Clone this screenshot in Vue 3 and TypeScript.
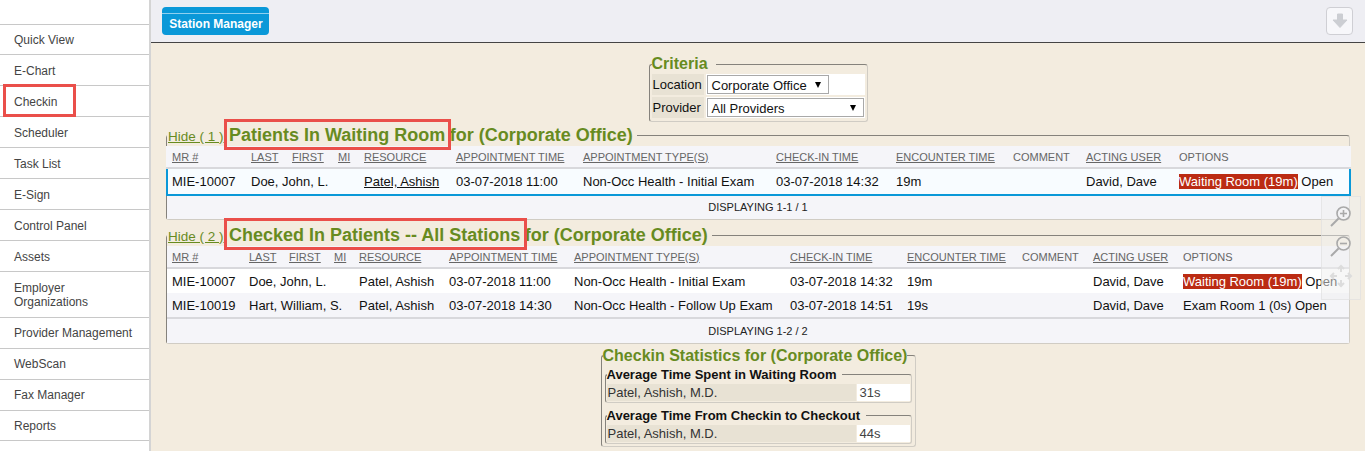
<script setup lang="ts">
const menu = ['Quick View','E-Chart','Checkin','Scheduler','Task List','E-Sign','Control Panel','Assets','Employer Organizations','Provider Management','WebScan','Fax Manager','Reports']
const heads = ['MR #','LAST','FIRST','MI','RESOURCE','APPOINTMENT TIME','APPOINTMENT TYPE(S)','CHECK-IN TIME','ENCOUNTER TIME','COMMENT','ACTING USER','OPTIONS']
const plain = new Set(['COMMENT','OPTIONS'])
const w1 = [79,41,46,26,92,127,193,120,117,73,93,176]
const w2 = [77,40,45,25,90,125,216,117,115,71,90,171]
const wait = { mr:'MIE-10007', name:'Doe, John, L.', res:'Patel, Ashish', time:'03-07-2018 11:00', type:'Non-Occ Health - Initial Exam', checkin:'03-07-2018 14:32', enc:'19m', user:'David, Dave', room:'Waiting Room (19m)', red:true }
const hart = { mr:'MIE-10019', name:'Hart, William, S.', res:'Patel, Ashish', time:'03-07-2018 14:30', type:'Non-Occ Health - Follow Up Exam', checkin:'03-07-2018 14:51', enc:'19s', user:'David, Dave', room:'Exam Room 1 (0s)', red:false }
</script>

<template>
  <div class="page">
    <nav class="side">
      <a v-for="m in menu" :key="m" class="item" :class="{ tall: m.startsWith('Employer') }">{{ m }}</a>
    </nav>
    <main class="main">
      <header class="bar">
        <button class="station">Station Manager</button>
        <button class="down" aria-label="Download">
          <svg width="20" height="20" viewBox="0 0 20 20"><path d="M7.5 3h5v6h4.5L10 16.5 3 9h4.5z" fill="#ccced3" stroke="#ccced3" stroke-linejoin="round"/></svg>
        </button>
      </header>

      <div class="content">
        <fieldset class="box criteria">
          <legend class="lg16">Criteria</legend>
          <div class="crit-row">
            <span class="lab">Location</span>
            <span class="val"><span class="sel s1">Corporate Office<i class="tri"></i></span></span>
          </div>
          <div class="crit-row">
            <span class="lab">Provider</span>
            <span class="val"><span class="sel s2">All Providers<i class="tri"></i></span></span>
          </div>
        </fieldset>

        <fieldset class="box sect first">
          <legend class="sect-lg"><a class="hide">Hide ( 1 )</a> <b>Patients In Waiting Room</b> <b>for (Corporate Office)</b></legend>
          <table class="grid g1">
            <colgroup><col v-for="(w,i) in w1" :key="i" :style="{ width: w + 'px' }"></colgroup>
            <thead><tr><th v-for="h in heads" :key="h"><span :class="{ u: !plain.has(h) }">{{ h }}</span></th></tr></thead>
            <tbody>
              <tr class="selrow">
                <td>{{ wait.mr }}</td><td colspan="3">{{ wait.name }}</td><td><u>{{ wait.res }}</u></td><td>{{ wait.time }}</td><td>{{ wait.type }}</td><td>{{ wait.checkin }}</td><td>{{ wait.enc }}</td><td></td><td>{{ wait.user }}</td>
                <td><span class="red">{{ wait.room }}</span> Open</td>
              </tr>
            </tbody>
          </table>
          <div class="foot">DISPLAYING 1-1 / 1</div>
        </fieldset>

        <fieldset class="box sect second">
          <legend class="sect-lg"><a class="hide">Hide ( 2 )</a> <b>Checked In Patients -- All Stations</b> <b>for (Corporate Office)</b></legend>
          <table class="grid g2">
            <colgroup><col v-for="(w,i) in w2" :key="i" :style="{ width: w + 'px' }"></colgroup>
            <thead><tr><th v-for="h in heads" :key="h"><span :class="{ u: !plain.has(h) }">{{ h }}</span></th></tr></thead>
            <tbody>
              <tr v-for="(r,i) in [wait, hart]" :key="r.mr" :class="i ? 'alt' : 'wh'">
                <td>{{ r.mr }}</td><td colspan="3">{{ r.name }}</td><td>{{ r.res }}</td><td>{{ r.time }}</td><td>{{ r.type }}</td><td>{{ r.checkin }}</td><td>{{ r.enc }}</td><td></td><td>{{ r.user }}</td>
                <td><span :class="{ red: r.red }">{{ r.room }}</span> Open</td>
              </tr>
            </tbody>
          </table>
          <div class="foot foot2">DISPLAYING 1-2 / 2</div>
        </fieldset>

        <fieldset class="box stats">
          <legend class="lg16 stats-lg">Checkin Statistics for (Corporate Office)</legend>
          <fieldset class="box sub">
            <legend>Average Time Spent in Waiting Room</legend>
            <div class="stat"><span class="sn">Patel, Ashish, M.D.</span><span class="sv">31s</span></div>
          </fieldset>
          <fieldset class="box sub">
            <legend>Average Time From Checkin to Checkout</legend>
            <div class="stat"><span class="sn">Patel, Ashish, M.D.</span><span class="sv">44s</span></div>
          </fieldset>
        </fieldset>
      </div>
    </main>

    <div class="tools">
      <div class="tool"><svg width="26" height="26" viewBox="0 0 26 26" fill="none" stroke="#a9a9a9" stroke-width="1.6"><circle cx="15.5" cy="10.5" r="6.5"/><path d="M12 10.5h7M15.5 7v7"/><path d="M10.5 15.5 3 23" stroke-width="2"/></svg></div>
      <div class="tool"><svg width="26" height="26" viewBox="0 0 26 26" fill="none" stroke="#a9a9a9" stroke-width="1.6"><circle cx="15.5" cy="10.5" r="6.5"/><path d="M12 10.5h7"/><path d="M10.5 15.5 3 23" stroke-width="2"/></svg></div>
      <div class="tool"><svg width="26" height="26" viewBox="0 0 26 26" fill="none" stroke="#dcdcdc" stroke-width="2"><path d="M13 3v6M13 17v6M3 13h6M17 13h6M10 6l3-3 3 3M10 20l3 3 3-3M6 10l-3 3 3 3M20 10l3 3-3 3"/></svg></div>
    </div>

    <div class="mark m1"></div>
    <div class="mark m2"></div>
    <div class="mark m3"></div>
  </div>
</template>

<style>
html, body { margin: 0; overflow: hidden; }
</style>

<style scoped>
.page { position: relative; display: flex; width: 1365px; height: 451px; overflow: hidden; font-family: "Liberation Sans", Arial, sans-serif; background: #f3ecdf; color: #111; }
.side { width: 149px; flex: none; background: #fff; border-right: 2px solid #d4d4d4; padding-top: 24px; }
.item { display: flex; align-items: center; box-sizing: border-box; height: 31px; padding: 0 14px; font-size: 12px; color: #444; border-top: 1px solid #c8c8c8; line-height: 14px; }
.item:first-child { height: 30px; }
.item:nth-child(n+2):nth-child(-n+8) { padding-top: 1px; }
.item:last-child { border-bottom: 1px solid #c8c8c8; }
.item.tall { height: 46px; padding-right: 40px; }
.main { flex: 1; min-width: 0; }
.bar { background: #eeeef3; border-bottom: 1px solid #444; display: flex; align-items: flex-start; justify-content: space-between; padding: 7px 12px 0 11px; box-sizing: border-box; height: 43px; }
.station { width: 107px; height: 28px; border: 0; border-radius: 4px; background: #0a98d8; color: #fff; font: bold 12px "Liberation Sans", Arial, sans-serif; padding: 6px 0 0 1px; position: relative; }
.station::before { content: ""; position: absolute; left: 0; right: 0; top: 6px; height: 1px; background: #8fd0ef; }
.down { width: 27px; height: 28px; padding: 0; border: 1px solid #cfcfd4; border-radius: 4px; background: #f7f7fa; display: flex; align-items: center; justify-content: center; }
.content { display: flex; flex-direction: column; align-items: center; padding: 12px 15px 0; }
.box { margin: 0; min-width: 0; border: 1px solid #d0ccc4; border-top-color: #85827c; border-left-color: #85827c; border-radius: 3px; box-sizing: border-box; }
.lg16 { font-size: 16px; font-weight: bold; color: #678b1f; padding: 0 8px 0 0; line-height: 18px; white-space: nowrap; }
.criteria { width: 219px; height: 67px; padding: 1px 2px 0; }
.crit-row { display: flex; height: 21px; margin-bottom: 2px; font-size: 13px; color: #111; }
.crit-row .lab { width: 52px; background: #e8e2d4; line-height: 22px; padding-left: 1px; box-sizing: border-box; }
.crit-row .val { flex: 1; background: #fff; margin-left: 2px; padding-left: 1px; }
.sel { display: flex; justify-content: space-between; align-items: center; box-sizing: border-box; height: 19px; margin-top: 1px; border: 1px solid #a9a9a9; background: #fff; padding: 1px 7px 0 4px; font-size: 13px; }
.s1 { width: 122px; }
.s2 { width: 157px; }
.tri { width: 0; height: 0; border-left: 3.5px solid transparent; border-right: 3.5px solid transparent; border-top: 6px solid #000; }
.sect { width: 1184px; padding: 0; }
.first { margin-top: 3px; }
.second { margin-top: 5px; }
.sect-lg { padding: 0 4px 0 1px; color: #678b1f; height: 21px; line-height: 21px; white-space: nowrap; }
.sect-lg b { font-size: 18px; font-weight: bold; }
.hide { font-size: 13.5px; text-decoration: underline; margin-right: 1px; }
.grid { table-layout: fixed; width: 1182px; border-collapse: collapse; font-size: 13px; background: #f5f5f9; }
.g1 { width: 1183px; margin-left: -1px; }
.grid th { height: 22px; padding: 0 0 0 5px; font-size: 11px; font-weight: normal; text-align: left; color: #666; white-space: nowrap; border-bottom: 2px solid #d8d8dc; box-sizing: border-box; }
.u { text-decoration: underline; }
.grid td { padding: 0 0 0 5px; white-space: nowrap; font-size: 13px; height: 24px; color: #111; }
.selrow td { background: #f8fcff; border-top: 2px solid #0a98d8; border-bottom: 2px solid #0a98d8; height: 25px; }
.selrow td:first-child { border-left: 2px solid #0a98d8; padding-left: 4px; }
.selrow td:last-child { border-right: 2px solid #0a98d8; }
.wh td { background: #fff; }
.alt td { background: #f5f5f9; border-bottom: 2px solid #d8d8dc; }
.red { background: #bb2b13; color: #fff; }
.foot { height: 23px; line-height: 23px; text-align: center; font-size: 11px; color: #222; background: #f5f5f9; }
.foot2 { height: 24px; line-height: 25px; }
.stats { width: 315px; padding: 2px 3px 2px; margin-top: 2px; }
.stats-lg { margin-left: -2px; padding-right: 0; line-height: 20px; height: 19px; }
.sub { padding: 2px 1px 1px; }
.sub + .sub { margin-top: 5px; }
.sub legend { font-size: 13px; font-weight: bold; color: #111; padding: 0 6px 0 0; line-height: 15px; white-space: nowrap; }
.stat { display: flex; height: 17px; line-height: 17px; font-size: 13px; color: #333; }
.sn { width: 249px; background: #e8e2d4; padding-left: 1px; box-sizing: border-box; }
.sv { flex: 1; background: #fff; padding-left: 3px; margin-left: 1px; color: #444; }
.tools { position: absolute; left: 1321px; top: 196px; width: 40px; height: 104px; box-sizing: border-box; padding-top: 4px; border: 1px solid rgba(220,220,220,.55); background: rgba(240,240,240,.5); display: flex; flex-direction: column; align-items: center; }
.tool { height: 30px; display: flex; align-items: center; }
.mark { position: absolute; border: 3px solid #ea4f4a; box-sizing: border-box; pointer-events: none; }
.m1 { left: 3px; top: 84px; width: 73px; height: 33px; }
.m2 { left: 224px; top: 119px; width: 227px; height: 31px; }
.m3 { left: 224px; top: 218px; width: 303px; height: 32px; }
</style>
